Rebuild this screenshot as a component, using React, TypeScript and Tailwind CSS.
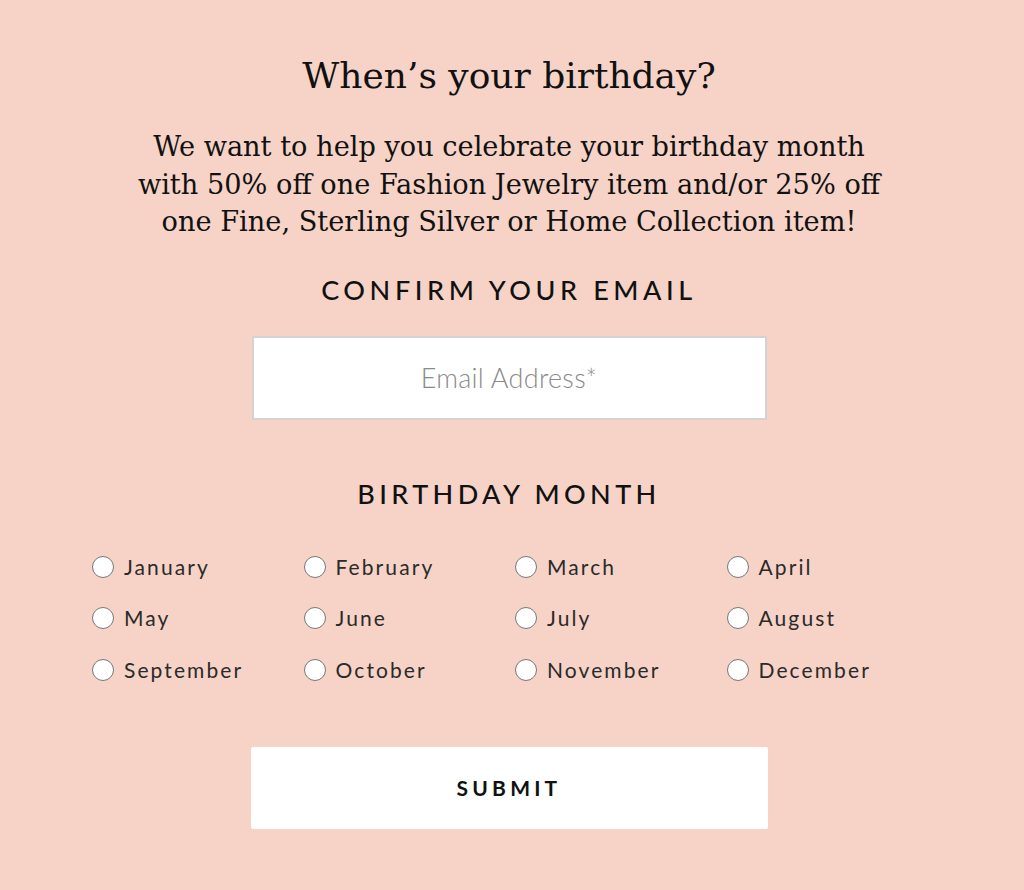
import React from "react";

const months = [
  "January","February","March","April",
  "May","June","July","August",
  "September","October","November","December",
];

export default function App() {
  return (
    <div className="min-h-[890px] w-full bg-[#f6d3c6] flex flex-col items-center pr-[6px]">
      <h1 className="mt-[51px] text-[36px] leading-[50px] text-[#111] font-['DejaVu_Serif',serif]">
        When’s your birthday?
      </h1>
      <p className="mt-[27px] w-[800px] text-center text-[27.2px] leading-[37.5px] text-[#111] font-['DejaVu_Serif',serif]">
        We want to help you celebrate your birthday month<br />
        with 50% off one Fashion Jewelry item and/or 25% off<br />
        one Fine, Sterling Silver or Home Collection item!
      </p>
      <h2 className="mt-[32px] text-[27px] leading-[34px] tracking-[4.6px] text-[#111] font-['Lato',sans-serif] font-medium">
        CONFIRM YOUR EMAIL
      </h2>
      <input
        type="email"
        placeholder="Email Address*"
        className="mt-[29px] w-[515px] h-[84px] bg-white border-2 border-[#d3d3d3] text-center text-[27px] tracking-[0.3px] text-[#333] placeholder:text-[#8a8a8a] font-['Lato',sans-serif] font-light outline-none"
      />
      <h2 className="mt-[57px] text-[27px] leading-[34px] tracking-[4.4px] text-[#111] font-['Lato',sans-serif] font-medium">
        BIRTHDAY MONTH
      </h2>
      <div className="mt-[45px] w-[846px] ml-[12px] grid grid-cols-4 gap-y-[29.5px]">
        {months.map((m) => (
          <label key={m} className="flex items-center gap-[10px] h-[22px] font-['Lato',sans-serif] text-[21px] tracking-[2.1px] text-[#2a2a2a]">
            <span className="w-[22px] h-[22px] rounded-full bg-white border-[1.5px] border-[#777] shrink-0" />
            <span>{m}</span>
          </label>
        ))}
      </div>
      <button className="mt-[66px] w-[517px] h-[82px] bg-white rounded-[2px] font-['Lato',sans-serif] font-bold text-[21px] tracking-[4.2px] text-[#111]">
        SUBMIT
      </button>
    </div>
  );
}
